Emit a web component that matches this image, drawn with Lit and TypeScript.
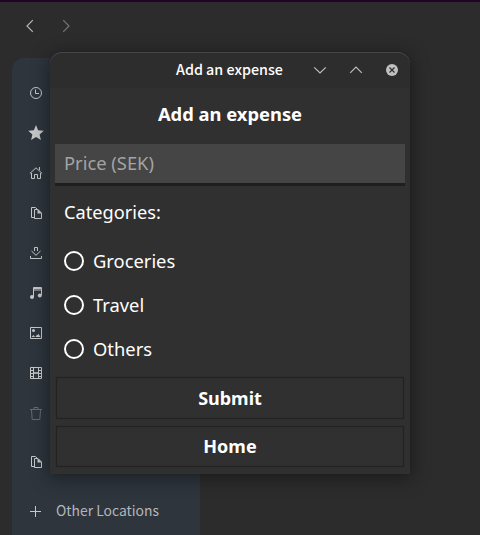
import { LitElement, html, css, svg } from "lit";
import { customElement } from "lit/decorators.js";

const icons: Record<string, unknown> = {
  recent: svg`<circle cx="7" cy="7" r="5.5" /><path d="M6.5 3.5V7.5H10" />`,
  starred: svg`<path class="solid" d="M7-.9L9.1 4.3L14.8 4.8L10.6 8.5L11.9 14.1L7 11.1L2.1 14.1L3.4 8.5L-.8 4.8L4.9 4.3Z" />`,
  home: svg`<path d="M.8 7.5L7 1.8L13.2 7.5M2.5 7V12.5H5.5V8.5H8.5V12.5H11.5V7M10.5 1V4" />`,
  copy: svg`<path d="M5 11.5H2.5V1.5H6.5L8 3" /><path d="M5.5 3.5H9L12.5 7V12.5H5.5Z" /><path class="solid" d="M8.5 3L13 7.5H8.5Z" />`,
  downloads: svg`<path d="M5.5 5V1.5H8.5V5M2.5 5L7 9.3L11.5 5M1.5 10V12.5H12.5V10" />`,
  music: svg`<path d="M4.5 11V1.5H12.5V9M4.5 4H12.5" /><path d="M4.5 2.5H12.5" /><circle class="solid" cx="3" cy="11" r="2" /><circle class="solid" cx="10.8" cy="9.5" r="2" />`,
  pictures: svg`<path d="M1.5 1.5H12.5V12.5H1.5Z" /><circle class="solid" cx="4.5" cy="4.5" r="1.5" /><path class="solid" d="M2.5 11L4.5 9L6 11ZM6.5 11Q7 9 8 9.3L9.5 8L11.5 11Z" />`,
  videos: svg`<path d="M1.5 1.5H12.5V12.5H1.5ZM4.5 1V13M9.5 1V13" /><path stroke-width="1.6" d="M4 7H10" /><path d="M2 4.5H4M2 7.5H4M2 10.5H4M10 4.5H12M10 7.5H12M10 10.5H12" />`,
  trash: svg`<path d="M1 3.5H13M5 3V1.5H9V3M2.5 4L3.2 13.5H10.8L11.5 4" />`,
  plus: svg`<path d="M1 7.5H12M6.5 2V13" />`,
};

@customElement("app-root")
export class AppRoot extends LitElement {
  static styles = css`
    * { box-sizing: border-box; }
    :host {
      display: block;
      position: relative;
      box-sizing: border-box;
      width: 480px;
      height: 535px;
      overflow: hidden;
      background: #2c2c2c;
      border-top: 2px solid #250029;
      font-family: "Noto Sans", sans-serif;
      color: #fff;
    }
    svg {
      display: block;
      width: 14px;
      height: 14px;
      overflow: visible;
      fill: none;
      stroke: currentColor;
      stroke-width: 1;
    }
    .solid { fill: currentColor; stroke: none; }
    .nav {
      display: flex;
      gap: 22px;
      height: 56px;
      padding: 17px 0 0 23px;
      color: #b8b8b8;
    }
    .nav svg, .controls svg { stroke-width: 1.15; }
    .nav svg + svg { color: #777; }
    .places {
      display: flex;
      flex-direction: column;
      width: 188px;
      height: 477px;
      margin-left: 12px;
      padding-top: 15px;
      border-radius: 12px 0 0 0;
      background: #2e353d;
    }
    .place {
      display: flex;
      align-items: center;
      flex: none;
      height: 40px;
      padding-left: 17px;
      gap: 13px;
      font: 13.9px "Noto Sans CJK JP", "Noto Sans", sans-serif;
      color: #c6c8ca;
    }
    .place span { margin-top: -2px; color: #b4b6b9; }
    .trash { color: #666b71; }
    .group, .plus { margin-top: 9px; }
    .dialog {
      position: absolute;
      left: 50px;
      top: 50px;
      width: 360px;
      height: 422px;
      border-radius: 12px 12px 0 0;
      background: #303030;
      box-shadow: 0 3px 18px 2px rgba(0, 0, 0, 0.38), 0 0 1px rgba(0, 0, 0, 0.3);
    }
    .titlebar {
      display: grid;
      grid-template-columns: 1fr auto;
      align-items: center;
      height: 36px;
      padding: 0 11px 0 126px;
      border-radius: 12px 12px 0 0;
      background: #2d2d2d;
      box-shadow: inset 0 1px #464646;
    }
    .caption {
      margin-top: -3px;
      font: 500 14.3px "Noto Sans CJK JP", "Noto Sans", sans-serif;
      white-space: nowrap;
    }
    .controls { display: flex; gap: 22px; color: #c0c0c0; }
    .content { padding: 0 5px; }
    .heading {
      margin: 0;
      height: 56px;
      font-size: 18.35px;
      font-weight: 700;
      line-height: 51px;
      text-align: center;
    }
    .price {
      display: block;
      width: 350px;
      height: 42px;
      padding: 0 9px 3px;
      border: 0;
      border-bottom: 3px solid #1e1e1e;
      border-radius: 0;
      outline: 0;
      background: #454545;
      color: #fff;
      font: 18.35px "Noto Sans", sans-serif;
    }
    .price::placeholder { color: #a3a3a3; opacity: 1; }
    .label { height: 53px; padding-left: 9px; font-size: 18.2px; line-height: 53px; }
    .choice {
      display: flex;
      align-items: center;
      gap: 9px;
      height: 44px;
      padding-left: 9px;
      font-size: 18.35px;
    }
    .choice-text { padding-bottom: 2px; }
    .ring { width: 20px; height: 20px; border: 2px solid #fff; border-radius: 50%; }
    .actions { display: grid; gap: 7px; padding: 6px 1px 0; }
    .action {
      height: 42px;
      padding: 0;
      border: 1px solid #222;
      border-radius: 1px;
      background: #303030;
      box-shadow: 0 0 1px rgba(0, 0, 0, 0.4), inset 0 0 1px rgba(0, 0, 0, 0.4);
      color: #fff;
      font: 700 18px "Noto Sans", sans-serif;
    }
    .action + .action { height: 41px; padding-bottom: 1px; }
  `;

  private place(name: string, label = "", extra = "") {
    return html`<div class="place ${name} ${extra}">
      <svg viewBox="0 0 14 14">${icons[name]}</svg>${label ? html`<span>${label}</span>` : ""}
    </div>`;
  }

  render() {
    return html`
      <nav class="nav">
        <svg viewBox="0 0 14 14"><path d="M9.8 1.2L4 7L9.8 12.8" /></svg>
        <svg viewBox="0 0 14 14"><path d="M4.2 1.2L10 7L4.2 12.8" /></svg>
      </nav>
      <aside class="places">
        ${["recent", "starred", "home", "copy", "downloads", "music", "pictures", "videos", "trash"].map((n) => this.place(n))}
        ${this.place("copy", "", "group")} ${this.place("plus", "Other Locations")}
      </aside>
      <section class="dialog">
        <header class="titlebar">
          <span class="caption">Add an expense</span>
          <div class="controls">
            <svg viewBox="0 0 14 14"><path d="M1.2 4.3L7 10L12.8 4.3" /></svg>
            <svg viewBox="0 0 14 14"><path d="M1.2 9.8L7 4.1L12.8 9.8" /></svg>
            <svg viewBox="0 0 14 14"><circle class="solid" cx="7" cy="7" r="6" /><path stroke="#2d2d2d" d="M4.5 4.5L9.5 9.5M9.5 4.5L4.5 9.5" /></svg>
          </div>
        </header>
        <div class="content">
          <h1 class="heading">Add an expense</h1>
          <input class="price" placeholder="Price (SEK)" />
          <div class="label">Categories:</div>
          ${["Groceries", "Travel", "Others"].map(
            (c) => html`<div class="choice"><span class="ring"></span><span class="choice-text">${c}</span></div>`
          )}
          <div class="actions">
            <button class="action">Submit</button>
            <button class="action">Home</button>
          </div>
        </div>
      </section>
    `;
  }
}
